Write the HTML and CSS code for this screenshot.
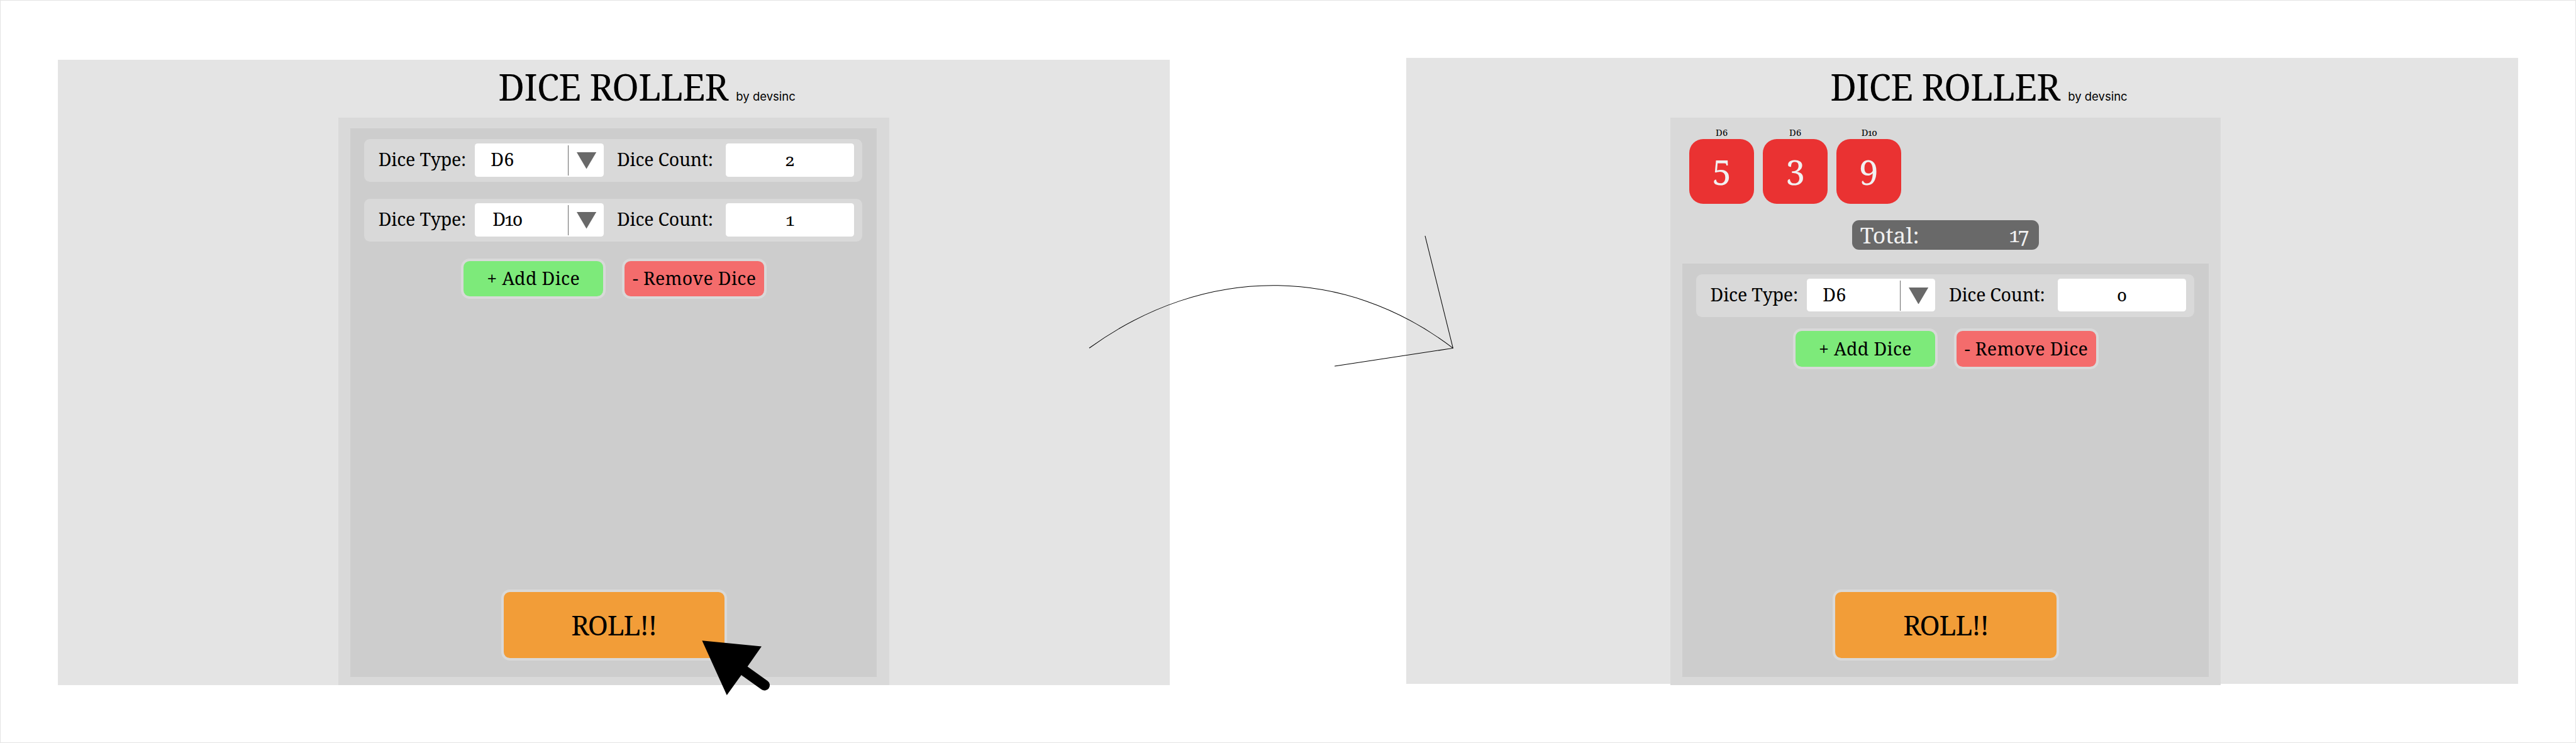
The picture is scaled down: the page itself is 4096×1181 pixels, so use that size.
FILE: index.html
```html
<!DOCTYPE html>
<html lang="en">
<head>
<meta charset="utf-8">
<title>Dice Roller</title>
<link rel="stylesheet" href="styles.css">
</head>
<body>
<main class="board">
  <section class="screen">
    <div class="shell">
      <header class="header"><h1 class="title">DICE ROLLER</h1><span class="byline">by devsinc</span></header>
      <div class="panel">
        <div class="tray">
          <div class="rows">
            <div class="row">
              <span class="label">Dice Type:</span>
              <div class="select"><span class="value">D6</span><span class="toggle"><svg class="caret" viewBox="0 0 34 29"><path d="M0 0H34L17 29Z"/></svg></span></div>
              <span class="label label-count">Dice Count:</span>
              <div class="count">2</div>
            </div>
            <div class="row">
              <span class="label">Dice Type:</span>
              <div class="select"><span class="value value-long">D10</span><span class="toggle"><svg class="caret" viewBox="0 0 34 29"><path d="M0 0H34L17 29Z"/></svg></span></div>
              <span class="label label-count">Dice Count:</span>
              <div class="count">1</div>
            </div>
          </div>
          <div class="actions"><button class="btn add">+ Add Dice</button><button class="btn remove">- Remove Dice</button></div>
          <button class="btn roll">ROLL!!</button>
        </div>
      </div>
    </div>
  </section>

  <section class="screen screen-result">
    <div class="shell">
      <header class="header"><h1 class="title">DICE ROLLER</h1><span class="byline">by devsinc</span></header>
      <div class="panel panel-result">
        <div class="dice">
          <div class="die"><span class="die-type">D6</span><span class="face">5</span></div>
          <div class="die"><span class="die-type">D6</span><span class="face">3</span></div>
          <div class="die"><span class="die-type die-type-long">D10</span><span class="face">9</span></div>
        </div>
        <div class="total"><span>Total:</span><span class="sum">17</span></div>
        <div class="tray tray-result">
          <div class="rows">
            <div class="row">
              <span class="label">Dice Type:</span>
              <div class="select"><span class="value">D6</span><span class="toggle"><svg class="caret" viewBox="0 0 34 29"><path d="M0 0H34L17 29Z"/></svg></span></div>
              <span class="label label-count">Dice Count:</span>
              <div class="count">0</div>
            </div>
          </div>
          <div class="actions"><button class="btn add">+ Add Dice</button><button class="btn remove">- Remove Dice</button></div>
          <button class="btn roll">ROLL!!</button>
        </div>
      </div>
    </div>
  </section>

  <svg class="overlay" viewBox="0 0 4448 1283">
    <path class="flow" d="M1880.8 600.8C2080 456.7 2320 456.7 2508.9 601M2460.7 407L2508.9 601L2304.5 632"/>
    <path class="cursor" d="M1212.3 1105.7L1315 1115.7L1290.7 1150.7L1325.6 1175.5A9.1 9.1 0 0 1 1314.6 1190L1280 1165.3L1255 1200Z"/>
  </svg>
</main>
</body>
</html>
```
FILE: styles.css
```css
/* 1rem is ten design units on the 4448-unit-wide board */
html {
  font-size: calc(100vw / 444.8);
}

* {
  box-sizing: border-box;
}

body {
  margin: 0;
  background: #fff;
  color: #000;
  font-family: "Noto Serif", "DejaVu Serif Condensed", "DejaVu Serif", serif;
  font-variant-numeric: oldstyle-nums;
  overflow: hidden;
}

.board {
  position: relative;
  display: flex;
  align-items: flex-start;
  justify-content: space-between;
  height: 100vh;
  padding: 9.9rem 9.9rem 0;
  border: 1px solid #e4e4e4;
}

.screen {
  width: 192rem;
  height: 108rem;
  margin-top: 0.3rem;
  padding-left: 48.4rem;
  background: #e4e4e4;
}

.screen-result {
  margin-top: 0;
  padding: 0.3rem 0 0 45.6rem;
}

.shell {
  width: 95.1rem;
}

.header {
  display: flex;
  align-items: baseline;
  gap: 1.4rem;
  height: 10rem;
  padding-left: 27.64rem;
  white-space: nowrap;
}

.title {
  margin: 0;
  font-size: 6.25rem;
  font-weight: 400;
  line-height: 9.35rem;
  letter-spacing: -0.085rem;
}

.byline {
  font-family: Inter, "Liberation Sans", sans-serif;
  font-size: 2.01rem;
}

.panel {
  display: flex;
  flex-direction: column;
  height: 98rem;
  padding: 1.9rem 2.1rem 1.5rem;
  background: #d9d9d9;
}

.panel-result {
  padding-top: 1.4rem;
}

.tray {
  display: flex;
  flex: 1;
  flex-direction: column;
  padding: 1.8rem 0 2.8rem;
  background: #cdcdcd;
}

.rows {
  display: grid;
  gap: 2.9rem;
  margin-left: 2.4rem;
}

.row {
  display: grid;
  grid-template-columns: 16.66rem 22.2rem 21.1rem 22.2rem;
  width: 86rem;
  height: 7.4rem;
  padding: 0.8rem 0 0 2.44rem;
  border-radius: 1rem;
  background: #d9d9d9;
  font-size: 3.1rem;
  white-space: nowrap;
}

.label {
  line-height: 5.4rem;
  letter-spacing: -0.02rem;
}

.label-count {
  padding-left: 2.34rem;
  letter-spacing: -0.027rem;
}

.select,
.count {
  height: 5.7rem;
  border-radius: 0.5rem;
  background: #fff;
}

.select {
  display: flex;
  justify-content: space-between;
}

.value {
  padding-left: 2.74rem;
  line-height: 5.4rem;
}

.value-long {
  padding-left: 3.04rem;
  letter-spacing: -0.3rem;
}

.toggle {
  width: 6.1rem;
  height: 5.2rem;
  margin-top: 0.3rem;
  padding: 1.2rem 0 0 1.4rem;
  border-left: 1px solid #696969;
}

.caret {
  display: block;
  width: 3.37rem;
  height: 2.9rem;
  fill: #696969;
}

.count {
  font-size: 3rem;
  line-height: 5.6rem;
  text-align: center;
}

.actions {
  display: flex;
  gap: 2.8rem;
  margin: 2.9rem 0 0 19.1rem;
}

.tray-result .actions {
  margin-top: 2rem;
}

.btn {
  padding: 0;
  border: 0.5rem solid #d9d9d9;
  border-radius: 1.5rem;
  color: #000;
  font-family: inherit;
  font-size: 3.1rem;
  letter-spacing: 0.036rem;
  white-space: nowrap;
}

.add,
.remove {
  width: 25rem;
  height: 7rem;
  padding-bottom: 0.2rem;
  line-height: 5.8rem;
}

.add {
  background: #7dea7a;
}

.remove {
  background: #f46c6c;
}

.roll {
  width: 39rem;
  height: 12.2rem;
  margin: auto 0 0 26rem;
  background: #f29d38;
  font-size: 4.7rem;
  line-height: 11.2rem;
  letter-spacing: -0.12rem;
}

.dice {
  display: flex;
  gap: 1.5rem;
  margin-left: 1.2rem;
}

.die {
  display: grid;
  grid-template-rows: 2.3rem 11.2rem;
  width: 11.2rem;
  text-align: center;
}

.die-type {
  font-size: 1.6rem;
  line-height: 2.2rem;
}

.die-type-long {
  letter-spacing: -0.15rem;
}

.face {
  border-radius: 2.4rem;
  background: #ea3232;
  color: #f1f1f1;
  font-size: 6rem;
  font-variant-numeric: lining-nums;
  line-height: 11.2rem;
}

.total {
  display: flex;
  justify-content: space-between;
  width: 32.3rem;
  height: 5.1rem;
  margin: 2.8rem 0 2.4rem 29.3rem;
  padding: 0 1.6rem 0 1.4rem;
  border-radius: 1.2rem;
  background: #696969;
  color: #f1f1f1;
  font-size: 3.85rem;
  line-height: 5rem;
}

.sum {
  padding-right: 0.5rem;
  font-size: 3.6rem;
  letter-spacing: -0.45rem;
}

/* Flow arrow and pointer drawn over both screens */
.overlay {
  position: absolute;
  top: -1px;
  left: -1px;
  width: 444.8rem;
  height: 128.3rem;
}

.flow {
  fill: none;
  stroke: #000;
  stroke-width: 1.1;
}
```
